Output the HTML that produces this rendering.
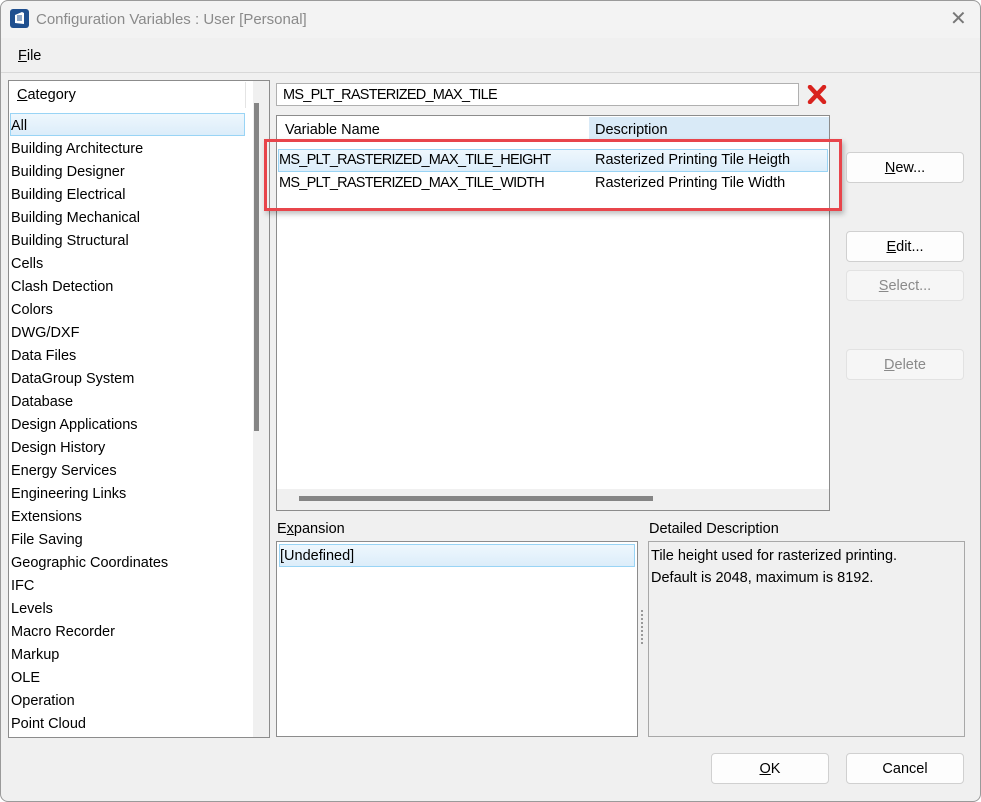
<!DOCTYPE html>
<html><head><meta charset="utf-8"><style>
*{box-sizing:border-box;margin:0;padding:0}
body{width:981px;height:802px;background:#fff;font-family:"Liberation Sans",sans-serif;font-size:14.5px;color:#000;position:relative;overflow:hidden}
.win{position:absolute;left:0;top:0;width:981px;height:802px;background:#f0f0f0;border-radius:8px;overflow:hidden}
.frame{position:absolute;left:0;top:0;width:981px;height:802px;border:1px solid #9a9a9a;border-radius:8px;pointer-events:none}
.a{position:absolute;white-space:nowrap}
.box{position:absolute;background:#fff;border:1px solid #8c8c8c}
.btn{position:absolute;width:118px;height:31px;border:1px solid #d0d0d0;border-radius:4px;background:#fdfdfd;text-align:center;line-height:30px}
.dis{background:#f6f6f6;border-color:#e2e2e2;color:#8a8a8a}
u{text-decoration:underline}
.sel{position:absolute;background:linear-gradient(#eef7fd,#dcedfa);border:1px solid #99d4f5}
.vn{letter-spacing:-0.75px}
</style></head><body>
<div class="win">
 <div class="a" style="left:0;top:0;width:981px;height:38px;background:#f3f3f3"></div>
 <svg class="a" style="left:10px;top:9px" width="19" height="19" viewBox="0 0 19 19"><rect x="0" y="0" width="19" height="19" rx="3" fill="#1f4f8f"/><path d="M5 14 L5 6 L12 3 L14 4 L14 15 Z" fill="#fff"/><path d="M7 7h5M7 9h5M7 11h5" stroke="#1f4f8f" stroke-width="1"/></svg>
 <div class="a" style="left:36px;top:11px;font-size:15px;color:#8a8a8a">Configuration Variables : User [Personal]</div>
 <div class="a" style="left:950px;top:6px;font-size:20px;color:#777">✕</div>
 <div class="a" style="left:18px;top:48px"><u>F</u>ile</div>
 <div class="a" style="left:0;top:72px;width:981px;height:1px;background:#d8d8d8"></div>

 <div class="box" style="left:8px;top:80px;width:262px;height:658px">
  <div class="a" style="left:1px;top:1px;width:236px;height:26px;background:#fff;border-right:1px solid #e4e4e4"></div>
  <div class="a" style="left:8px;top:6px"><u>C</u>ategory</div>
  <div class="sel" style="left:1px;top:32px;width:235px;height:23px"></div>
  <div class="a" style="left:244px;top:0;width:16px;height:656px;background:#f0f0f0"></div>
  <div class="a" style="left:245px;top:22px;width:5px;height:328px;background:#858585"></div>
  <div style="position:absolute;left:2px;top:34px;line-height:23px">
   All<br>Building Architecture<br>Building Designer<br>Building Electrical<br>Building Mechanical<br>Building Structural<br>Cells<br>Clash Detection<br>Colors<br>DWG/DXF<br>Data Files<br>DataGroup System<br>Database<br>Design Applications<br>Design History<br>Energy Services<br>Engineering Links<br>Extensions<br>File Saving<br>Geographic Coordinates<br>IFC<br>Levels<br>Macro Recorder<br>Markup<br>OLE<br>Operation<br>Point Cloud
  </div>
 </div>

 <div class="box" style="left:276px;top:83px;width:523px;height:23px;border-color:#b0b0b0"></div>
 <div class="a vn" style="left:283px;top:87px">MS_PLT_RASTERIZED_MAX_TILE</div>
 <svg class="a" style="left:807px;top:85px" width="20" height="19" viewBox="0 0 20 19"><path d="M3 2 L17 17 M17 2 L3 17" stroke="#d9231e" stroke-width="4.5" stroke-linecap="round"/></svg>

 <div class="box" style="left:276px;top:115px;width:554px;height:396px">
  <div class="a" style="left:312px;top:1px;width:240px;height:25px;background:#d9eaf7"></div>
  <div class="a" style="left:8px;top:6px">Variable Name</div>
  <div class="a" style="left:318px;top:6px">Description</div>
  <div class="sel" style="left:1px;top:33px;width:550px;height:23px"></div>
  <div class="a vn" style="left:2px;top:36px">MS_PLT_RASTERIZED_MAX_TILE_HEIGHT</div>
  <div class="a" style="left:318px;top:36px">Rasterized Printing Tile Heigth</div>
  <div class="a vn" style="left:2px;top:59px">MS_PLT_RASTERIZED_MAX_TILE_WIDTH</div>
  <div class="a" style="left:318px;top:59px">Rasterized Printing Tile Width</div>
  <div class="a" style="left:0;top:373px;width:552px;height:21px;background:#f0f0f0"></div>
  <div class="a" style="left:22px;top:380px;width:354px;height:5px;background:#858585"></div>
 </div>
 <div class="a" style="left:264px;top:139px;width:578px;height:72px;border:3px solid #e8454b;box-shadow:2px 3px 5px rgba(0,0,0,.25)"></div>

 <div class="btn" style="left:846px;top:152px"><u>N</u>ew...</div>
 <div class="btn" style="left:846px;top:231px"><u>E</u>dit...</div>
 <div class="btn dis" style="left:846px;top:270px"><u>S</u>elect...</div>
 <div class="btn dis" style="left:846px;top:349px"><u>D</u>elete</div>

 <div class="a" style="left:277px;top:521px">E<u>x</u>pansion</div>
 <div class="box" style="left:276px;top:541px;width:362px;height:196px">
  <div class="sel" style="left:2px;top:2px;width:356px;height:23px"></div>
  <div class="a" style="left:3px;top:6px">[Undefined]</div>
 </div>
 <div class="a" style="left:641px;top:610px;width:2px;height:34px;border-left:2px dotted #999"></div>
 <div class="a" style="left:649px;top:521px">Detailed Description</div>
 <div class="box" style="left:648px;top:541px;width:317px;height:196px;background:#f0f0f0;border-color:#a8a8a8">
  <div class="a" style="left:2px;top:3px;line-height:22px">Tile height used for rasterized printing.<br>Default is 2048, maximum is 8192.</div>
 </div>

 <div class="btn" style="left:711px;top:753px"><u>O</u>K</div>
 <div class="btn" style="left:846px;top:753px">Cancel</div>
</div>
<div class="frame"></div>
</body></html>
